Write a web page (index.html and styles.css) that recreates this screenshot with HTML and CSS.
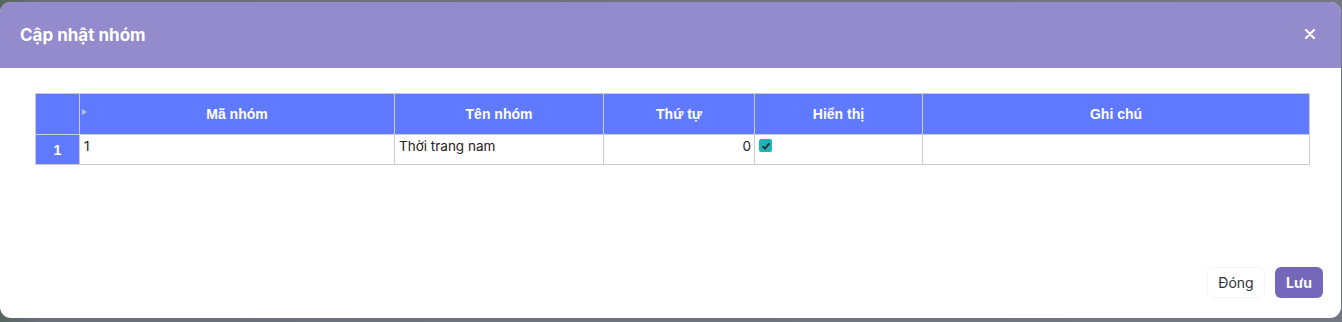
FILE: index.html
```html
<!DOCTYPE html>
<html lang="vi">
<head>
<meta charset="utf-8">
<title>Cập nhật nhóm</title>
<link rel="stylesheet" href="styles.css">
</head>
<body>
<div class="backdrop">
  <div class="modal">
    <div class="modal-header">
      <h1 class="modal-title">Cập nhật nhóm</h1>
      <button class="close" aria-label="Đóng">
        <svg width="10" height="10" viewBox="0 0 10 10"><path d="M1 1L9 9M9 1L1 9" stroke="#fff" stroke-width="2.2" stroke-linecap="round"/></svg>
      </button>
    </div>
    <div class="modal-body">
      <table class="grid">
        <colgroup>
          <col class="c-num"><col class="c-code"><col class="c-name"><col class="c-order"><col class="c-show"><col class="c-note">
        </colgroup>
        <thead>
          <tr>
            <th class="num"></th>
            <th class="first-col"><span class="tri"></span>Mã nhóm</th>
            <th>Tên nhóm</th>
            <th>Thứ tự</th>
            <th>Hiển thị</th>
            <th>Ghi chú</th>
          </tr>
        </thead>
        <tbody>
          <tr>
            <td class="num">1</td>
            <td>1</td>
            <td>Thời trang nam</td>
            <td class="right">0</td>
            <td><span class="check"><svg width="12" height="12" viewBox="0 0 12 12"><path d="M2.6 6.2L5 8.6L9.4 3.4" fill="none" stroke="#2b2f36" stroke-width="2"/></svg></span></td>
            <td></td>
          </tr>
        </tbody>
      </table>
    </div>
    <div class="modal-footer">
      <button class="btn btn-light">Đóng</button>
      <button class="btn btn-primary">Lưu</button>
    </div>
  </div>
</div>
</body>
</html>
```

FILE: styles.css
```css
* { box-sizing: border-box; }
html, body { margin: 0; padding: 0; }
body {
  width: 1342px;
  height: 322px;
  overflow: hidden;
  font-family: Inter, "Liberation Sans", sans-serif;
  background: linear-gradient(90deg, #55675f 0px, #6a6f7a 40px, #737782 100%);
}
.backdrop {
  height: 322px;
  padding: 2px 1px 4px 0;
  display: flex;
}
.modal {
  flex: 1;
  background: #fff;
  border-radius: 11px;
  overflow: hidden;
  display: flex;
  flex-direction: column;
}
.modal-header {
  height: 66px;
  background: #938bcb;
  display: flex;
  align-items: center;
  justify-content: space-between;
  padding: 0 26px 0 20px;
}
.modal-title {
  margin: 0;
  color: #fff;
  font-size: 17px;
  font-weight: 700;
  letter-spacing: 0;
}
.close {
  border: 0;
  background: none;
  padding: 0;
  display: flex;
  cursor: pointer;
  margin-top: -2px;
}
.modal-body {
  flex: 1;
  padding: 25px 32px 0 35px;
}
.grid {
  border-collapse: collapse;
  width: 1274px;
  table-layout: fixed;
  font-size: 13.5px;
}
.c-num { width: 44px; }
.c-code { width: 315px; }
.c-name { width: 209px; }
.c-order { width: 151px; }
.c-show { width: 168px; }
.c-note { width: 387px; }
.grid th, .grid td {
  border: 1px solid #cccccc;
}
.grid th {
  height: 41px;
  background: #5f79ff;
  color: #fff;
  font-family: "Liberation Sans", Arial, sans-serif;
  font-weight: 700;
  font-size: 14px;
  text-align: center;
  vertical-align: middle;
  padding: 0 4px;
}
.grid th.first-col { position: relative; }
.tri {
  position: absolute;
  left: 2px;
  top: 15px;
  width: 0;
  height: 0;
  border-left: 5px solid #b8bfd9;
  border-top: 3.5px solid transparent;
  border-bottom: 3.5px solid transparent;
}
.grid td {
  height: 30px;
  vertical-align: top;
  padding: 3px 4px 0;
  color: #222;
  line-height: 16px;
}
.grid td.num {
  background: #5f79ff;
  color: #fff;
  font-family: "Liberation Sans", Arial, sans-serif;
  font-weight: 700;
  font-size: 14px;
  text-align: center;
  vertical-align: bottom;
  padding: 0 0 6px;
}
.grid td.right { text-align: right; padding-right: 3px; }
.check {
  display: inline-flex;
  width: 13px;
  height: 13px;
  margin-top: 1px;
  margin-left: 0;
  border-radius: 2px;
  background: #1fb4b8;
  align-items: center;
  justify-content: center;
  vertical-align: top;
}
.modal-footer {
  display: flex;
  justify-content: flex-end;
  gap: 10px;
  padding: 0 18px 20px 0;
}
.btn {
  font-family: Inter, "Liberation Sans", sans-serif;
  font-size: 14px;
  height: 31px;
  border-radius: 6px;
  cursor: pointer;
  padding: 0 10px;
}
.btn-light {
  background: #fff;
  border: 1px solid #f4f4f6;
  color: #2f3440;
  width: 58px;
}
.btn-primary {
  background: #7467b9;
  border: 0;
  color: #fff;
  font-weight: 700;
  width: 48px;
}
```
